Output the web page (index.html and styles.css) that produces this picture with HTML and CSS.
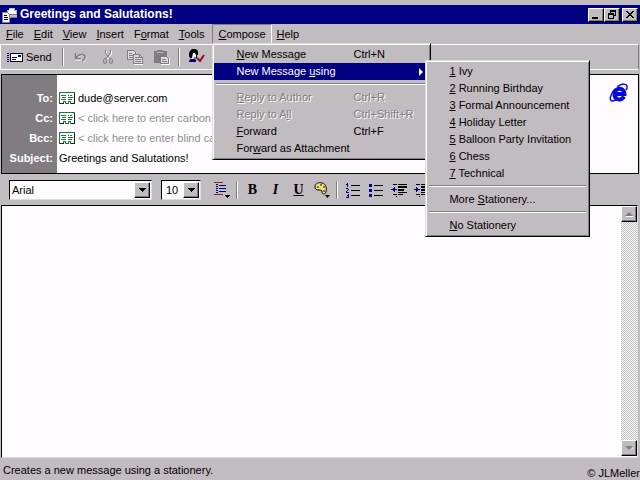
FILE: index.html
```html
<!DOCTYPE html>
<html lang="en">
<head>
  <meta charset="utf-8">
  <title>Greetings and Salutations!</title>
  <link rel="stylesheet" href="styles.css">
</head>
<body>
  <div class="window">
    <header class="titlebar">
      <svg class="icon" width="16" height="16" viewBox="0 0 16 16" shape-rendering="crispEdges">
        <path fill="#c0bcc0" d="M5 3h2V1h6v2h2v8H5z"/>
        <path fill="#fff" d="M6 4h1V2h5v2h2v3H6z"/>
        <path fill="#807c80" d="M8 7h7v1H8zM9 10h6v1H9z"/>
        <path fill="#fff" stroke="#807c80" d="M.5 5.500h5l2 2v8h-7z"/>
        <path fill="#000" d="M2 8h3v1H2zM2 10h4v1H2zM2 12h4v1H2z"/>
      </svg>
      <h1>Greetings and Salutations!</h1>
      <div class="window-buttons">
        <button aria-label="Minimize"><svg width="10" height="9" viewBox="0 0 10 9"><path d="M1 7h6v2H1z"/></svg></button>
        <button aria-label="Restore"><svg width="10" height="9" viewBox="0 0 10 9" shape-rendering="crispEdges"><path fill-rule="evenodd" d="M3 0h6v6H7V5h1V2H4v1H3zM1 3h6v6H1zM2 5v3h4V5z"/></svg></button>
        <button class="close" aria-label="Close"><svg width="10" height="9" viewBox="0 0 10 9" shape-rendering="crispEdges"><path d="M1 1h2v1h1v1h2V2h1V1h2v1H8v1H7v1H6v1h1v1h1v1h1v1H7V7H6V6H4v1H3v1H1V7h1V6h1V5h1V4H3V3H2V2H1z"/></svg></button>
      </div>
    </header>

    <nav class="menubar">
      <button><u>F</u>ile</button>
      <button><u>E</u>dit</button>
      <button><u>V</u>iew</button>
      <button><u>I</u>nsert</button>
      <button>F<u>o</u>rmat</button>
      <button><u>T</u>ools</button>
      <div class="menu-holder">
        <button class="open"><u>C</u>ompose</button>
        <div class="menu compose-menu">
          <button><span><u>N</u>ew Message</span><span class="key">Ctrl+N</span></button>
          <div class="submenu-holder">
            <button class="selected"><span>New Message <u>u</u>sing</span>
              <svg class="arrow" width="4" height="8" viewBox="0 0 4 8"><path fill="#fff" d="M0 0l4 4-4 4z"/></svg>
            </button>
            <div class="menu stationery-menu">
              <button><span><u>1</u> Ivy</span></button>
              <button><span><u>2</u> Running Birthday</span></button>
              <button><span><u>3</u> Formal Announcement</span></button>
              <button><span><u>4</u> Holiday Letter</span></button>
              <button><span><u>5</u> Balloon Party Invitation</span></button>
              <button><span><u>6</u> Chess</span></button>
              <button><span><u>7</u> Technical</span></button>
              <hr>
              <button><span>More <u>S</u>tationery...</span></button>
              <hr>
              <button><span><u>N</u>o Stationery</span></button>
            </div>
          </div>
          <hr>
          <button disabled><span><u>R</u>eply to Author</span><span class="key">Ctrl+R</span></button>
          <button disabled><span>Reply to A<u>l</u>l</span><span class="key">Ctrl+Shift+R</span></button>
          <button><span><u>F</u>orward</span><span class="key">Ctrl+F</span></button>
          <button><span>For<u>w</u>ard as Attachment</span></button>
        </div>
      </div>
      <button><u>H</u>elp</button>
    </nav>

    <div class="toolbar">
      <button class="send">
        <svg width="16" height="11" viewBox="0 0 16 11" shape-rendering="crispEdges">
          <path fill="#000080" d="M0 1h2v1H0zM0 3h2v1H0zM0 5h2v1H0zM0 7h2v1H0zM0 9h2v1H0z"/>
          <path fill="#fff" stroke="#000" d="M3.500 1.500h12v8h-12z"/>
          <path fill="#000080" d="M11 3h3v2h-3zM5 5h5v1H5zM5 7h4v1H5z"/>
        </svg>
        Send
      </button>
      <span class="divider"></span>
      <button class="tool" aria-label="Undo">
        <svg width="16" height="16" viewBox="0 0 16 16" fill="none">
          <path stroke="#fff" d="M3 5v6h6M4 10c3-5 9-4 9-1 0 2-1 3-3 4"/>
          <path stroke="#807c80" stroke-width="1.500" d="M2.500 4v5.500H8M3 9c3-5 9-4 9-1 0 2-1 3-3 4"/>
        </svg>
      </button>
      <button class="tool" aria-label="Cut">
        <svg width="16" height="16" viewBox="0 0 16 16" fill="none">
          <path stroke="#fff" d="M6.500 2v3l5 6M11.500 2v3l-5 6"/>
          <g stroke="#807c80">
            <path d="M5.500 1v3l5 6M10.500 1v3l-5 6"/>
            <ellipse cx="5" cy="12" rx="1.500" ry="2.500"/>
            <ellipse cx="11" cy="12" rx="1.500" ry="2.500"/>
          </g>
        </svg>
      </button>
      <button class="tool" aria-label="Copy">
        <svg width="16" height="16" viewBox="0 0 16 16" shape-rendering="crispEdges">
          <g fill="#dedade" stroke="#807c80">
            <path d="M.5 1.500h6l2 2v7h-8z"/>
            <path d="M6.500 5.500h6l3 3v6h-9z"/>
          </g>
          <path fill="#807c80" d="M2 4h3v1H2zM2 6h4v1H2zM2 8h4v1H2zM8 8h4v1H8zM8 10h6v1H8zM8 12h6v1H8zM12 5h1v3h3v1h-4z"/>
          <path fill="#fff" d="M7 15h9v1H7z"/>
        </svg>
      </button>
      <button class="tool" aria-label="Paste">
        <svg width="17" height="16" viewBox="0 0 17 16" shape-rendering="crispEdges">
          <path fill="#807c80" d="M1 2h3V1h6v1h4v12H1z"/>
          <path fill="#c0bcc0" d="M4 3h6v1H4z"/>
          <path fill="#dedade" stroke="#807c80" d="M7.500 7.500h6l2 2v5h-8z"/>
          <path fill="#807c80" d="M9 10h4v1H9zM9 12h5v1H9z"/>
          <path fill="#fff" d="M8 15h9v1H8zM16 9h1v6h-1z"/>
        </svg>
      </button>
      <span class="divider"></span>
      <button class="tool check" aria-label="Check Names">
        <svg width="17" height="16" viewBox="0 0 17 16">
          <path fill="#fff" d="M4 4h4v6H4z"/>
          <path d="M2 2l2-2h4l2 2v4H8L7 4H5l-1 5H2L1 7V4z"/>
          <path fill="none" stroke="#000" d="M8.500 5v4h-3"/>
          <path fill="#000080" d="M1 13l1-3h5l1 1v2z"/>
          <path fill="none" stroke="#901020" stroke-width="2" d="M9 9l3 3 4-6"/>
        </svg>
      </button>
    </div>

    <form class="headers">
      <div class="fields">
        <label for="to">To:</label>
        <div class="field">
          <svg class="card" width="16" height="13" viewBox="0 0 16 13" shape-rendering="crispEdges"><path fill="#fff" stroke="#207838" d="M.5.5h15v11h-4v-2h-2v2h-3v-2h-2v2h-4z"/><path fill="#207838" d="M2 3h5v1H2zM3 5h4v1H3zM2 7h5v1H2zM9 3h1v1H9zM11 3h2v1h-2zM9 5h5v1H9zM9 7h4v1H9z"/><path fill="#102818" d="M15 1h1v11h-1zM12 11h4v1h-4zM1 11h4v1H1z"/></svg>
          <input id="to" type="text" value="dude@server.com">
        </div>
        <label for="cc">Cc:</label>
        <div class="field">
          <svg class="card" width="16" height="13" viewBox="0 0 16 13" shape-rendering="crispEdges"><path fill="#fff" stroke="#207838" d="M.5.5h15v11h-4v-2h-2v2h-3v-2h-2v2h-4z"/><path fill="#207838" d="M2 3h5v1H2zM3 5h4v1H3zM2 7h5v1H2zM9 3h1v1H9zM11 3h2v1h-2zM9 5h5v1H9zM9 7h4v1H9z"/><path fill="#102818" d="M15 1h1v11h-1zM12 11h4v1h-4zM1 11h4v1H1z"/></svg>
          <input id="cc" type="text" placeholder="&lt; click here to enter carbon copy recipients &gt;">
        </div>
        <label for="bcc">Bcc:</label>
        <div class="field">
          <svg class="card" width="16" height="13" viewBox="0 0 16 13" shape-rendering="crispEdges"><path fill="#fff" stroke="#207838" d="M.5.5h15v11h-4v-2h-2v2h-3v-2h-2v2h-4z"/><path fill="#207838" d="M2 3h5v1H2zM3 5h4v1H3zM2 7h5v1H2zM9 3h1v1H9zM11 3h2v1h-2zM9 5h5v1H9zM9 7h4v1H9z"/><path fill="#102818" d="M15 1h1v11h-1zM12 11h4v1h-4zM1 11h4v1H1z"/></svg>
          <input id="bcc" type="text" placeholder="&lt; click here to enter blind carbon copy recipients &gt;">
        </div>
        <label for="subject">Subject:</label>
        <div class="field"><input id="subject" type="text" value="Greetings and Salutations!"></div>
      </div>
      <svg class="logo" width="20" height="20" viewBox="0 0 20 20" fill="none" stroke="#0808d8">
        <path stroke-width="4" d="M5 11h10.500c0-7-9.500-7-10 0 0 6.500 7 7 9.500 2.500"/>
        <path stroke-width="1.500" d="M8 4c5-4 11-4 10 1-.3 1-.5 1.500-1 2M6 6c-5 5-6 12-3 12 2 0 4-1 6-2"/>
      </svg>
    </form>

    <div class="formatbar">
      <span class="combo font-name">
        <select aria-label="Font"><option>Arial</option></select>
        <span class="combo-arrow"><svg width="7" height="4" viewBox="0 0 7 4" shape-rendering="crispEdges"><path d="M0 0h7v1H0zM1 1h5v1H1zM2 2h3v1H2zM3 3h1v1H3z"/></svg></span>
      </span>
      <span class="combo font-size">
        <select aria-label="Font size"><option>10</option></select>
        <span class="combo-arrow"><svg width="7" height="4" viewBox="0 0 7 4" shape-rendering="crispEdges"><path d="M0 0h7v1H0zM1 1h5v1H1zM2 2h3v1H2zM3 3h1v1H3z"/></svg></span>
      </span>
      <button class="tool" aria-label="Paragraph style">
        <svg width="16" height="16" viewBox="0 0 16 16" shape-rendering="crispEdges">
          <path fill="#902030" d="M0 0h9v1H0zM0 12h9v1H0z"/>
          <path fill="#000080" d="M2 2h2v1H2zM2 4h2v1H2zM2 6h2v1H2zM2 8h2v1H2zM2 10h2v1H2zM5 3h7v1H5zM5 6h7v1H5zM5 9h7v1H5z"/>
          <path d="M11 13h5v1h-5zM12 14h3v1h-3zM13 15h1v1h-1z"/>
        </svg>
      </button>
      <span class="divider"></span>
      <button class="tool letter bold">B</button>
      <button class="tool letter italic">I</button>
      <button class="tool letter underline">U</button>
      <button class="tool" aria-label="Font color">
        <svg width="16" height="16" viewBox="0 0 16 16">
          <path fill="#f0e080" stroke="#000" d="M1 5c0-4 4-5 7-4 4 1 5 5 4 9-1 3-4 2-4 0s-1-2-3-2c-3 0-4-1-4-3z"/>
          <path fill="#fff" stroke="#605020" d="M3.500 4.500h1v1h-1zM6.500 2.500h1v1h-1zM9.500 4.500h1v1h-1zM9.500 8.500h1v1h-1z"/>
          <path d="M11 13h5l-2.500 3z"/>
        </svg>
      </button>
      <span class="divider"></span>
      <button class="tool" aria-label="Numbered list">
        <svg width="16" height="16" viewBox="0 0 16 16" shape-rendering="crispEdges">
          <path fill="#000080" d="M2 1h1v4H2zM1 2h1v1H1zM1 6h2v1h1v1H3v1H2v1h2v1H1V9h1V8h1V7H1zM1 12h3v4H1v-1h2v-1H2v-1h1v-1H1z"/>
          <path d="M6 3h9v1H6zM6 8h9v1H6zM6 13h9v1H6z"/>
        </svg>
      </button>
      <button class="tool" aria-label="Bulleted list">
        <svg width="16" height="16" viewBox="0 0 16 16" shape-rendering="crispEdges">
          <path fill="#0000a0" d="M1 2h3v3H1zM1 7h3v3H1zM1 12h3v3H1z"/>
          <path d="M6 3h9v1H6zM6 8h9v1H6zM6 13h9v1H6z"/>
        </svg>
      </button>
      <button class="tool" aria-label="Decrease indent">
        <svg width="16" height="16" viewBox="0 0 16 16" shape-rendering="crispEdges">
          <path d="M2 2h4v1H2zM7 2h9v1H7zM7 4h9v2H7zM7 7h6v2H7zM7 10h9v1H7zM2 12h4v1H2zM7 12h5v1H7zM5 14h1v1H5z"/>
          <path fill="#000080" d="M0 7h2V6h1V5h1v2h2v1H4v2H3V9H2V8H0z"/>
        </svg>
      </button>
      <button class="tool" aria-label="Increase indent">
        <svg width="16" height="16" viewBox="0 0 16 16" shape-rendering="crispEdges">
          <path d="M2 2h4v1H2zM7 2h9v1H7zM7 4h9v2H7zM7 7h6v2H7zM7 10h9v1H7zM2 12h4v1H2zM7 12h5v1H7zM5 14h1v1H5z"/>
          <path fill="#000080" d="M6 7H4V6H3V5H2v2H0v1h2v2h1V9h1V8h2z"/>
        </svg>
      </button>
    </div>

    <main class="editor">
      <textarea aria-label="Message"></textarea>
      <div class="scrollbar">
        <button aria-label="Scroll up"><svg width="8" height="5" viewBox="0 0 8 5"><path fill="#807c80" d="M4 0l4 4H0z"/><path fill="#fff" d="M1 4h7v1H1z"/></svg></button>
        <button aria-label="Scroll down"><svg width="8" height="5" viewBox="0 0 8 5"><path fill="#fff" d="M5 5l3-4v1L5 5z"/><path fill="#807c80" d="M0 0h8L4 4z"/></svg></button>
      </div>
    </main>

    <footer class="statusbar">
      <span>Creates a new message using a stationery.</span>
      <span class="credit">© JLMeller</span>
    </footer>
  </div>
</body>
</html>
```

FILE: styles.css
```css
* {
  box-sizing: border-box;
}

body {
  margin: 0;
  background: #c0bcc0;
  font-family: "Liberation Sans", Arial, sans-serif;
  font-size: 11px;
  line-height: 17px;
  color: #000;
}

button, input, select, textarea {
  margin: 0;
  padding: 0;
  border: none;
  border-radius: 0;
  outline: none;
  background: none;
  font: inherit;
  color: inherit;
}

svg {
  display: block;
  flex: none;
}

u {
  text-underline-offset: 1px;
}

.window {
  display: flex;
  flex-direction: column;
  min-height: 100vh;
  padding-top: 5px;
}

/* title bar */
.titlebar {
  display: flex;
  align-items: center;
  height: 19px;
  padding: 0 2px;
  background: #000080;
  color: #fff;
}

.titlebar h1 {
  flex: 1;
  margin: 0 2px;
  font-size: 12px;
  font-weight: bold;
}

.window-buttons {
  display: flex;
}

.window-buttons button,
.combo-arrow,
.scrollbar button {
  display: flex;
  align-items: center;
  justify-content: center;
  width: 16px;
  height: 14px;
  background: #c0bcc0;
  border: 1px solid;
  border-color: #fff #000 #000 #fff;
  box-shadow: inset -1px -1px #807c80;
}

.window-buttons .close {
  margin-left: 2px;
}

/* menus */
.menubar {
  display: flex;
  height: 20px;
  padding-left: 1px;
}

.menubar > button,
.menu-holder > button {
  height: 20px;
  padding: 0 5px;
}

.menu-holder {
  position: relative;
  margin-left: 3px;
}

.menu-holder > .open {
  border: 1px solid;
  border-color: #807c80 #fff #fff #807c80;
}

.menu {
  position: absolute;
  z-index: 2;
  padding: 2px 1px;
  background: #c0bcc0;
  border: 1px solid;
  border-color: #dedade #000 #000 #dedade;
  box-shadow: inset 1px 1px #fff, inset -1px -1px #807c80;
}

.compose-menu {
  top: 19px;
  left: 0;
  width: 219px;
}

.stationery-menu {
  top: -3px;
  left: 211px;
  width: 165px;
}

.menu button {
  display: flex;
  align-items: center;
  width: 100%;
  height: 17px;
  padding-left: 22px;
  text-align: left;
  white-space: nowrap;
}

.menu button span:first-child {
  flex: 1;
}

.menu .key {
  width: 76px;
}

.menu .arrow {
  margin-right: 6px;
}

.menu button:disabled {
  color: #807c80;
  text-shadow: 1px 1px #fff;
}

.menu .selected {
  background: #000080;
  color: #fff;
}

.menu hr {
  height: 2px;
  margin: 3px 2px 4px;
  border: none;
  border-top: 1px solid #807c80;
  border-bottom: 1px solid #fff;
}

.submenu-holder {
  position: relative;
}

/* toolbars */
.toolbar,
.formatbar {
  display: flex;
  align-items: center;
}

.toolbar {
  height: 26px;
  margin: 0 1px 4px 0;
  padding-left: 6px;
  border: 1px solid;
  border-color: #fff #807c80 #fff #fff;
}

.send {
  display: flex;
  align-items: center;
  gap: 3px;
  width: 52px;
}

.divider {
  width: 2px;
  height: 18px;
  margin: 0 3px;
  border-left: 1px solid #807c80;
  border-right: 1px solid #fff;
}

.tool {
  display: flex;
  align-items: center;
  justify-content: center;
  width: 23px;
  height: 20px;
}

.toolbar .tool {
  width: 27px;
}

/* address block */
.headers {
  display: flex;
  margin: 0 1px;
  border: 1px solid #000;
  background: #fffbff;
}

.fields {
  flex: 1;
  display: grid;
  grid-template-columns: 55px 1fr;
  grid-auto-rows: 20px;
  padding: 13px 0 5px;
  background: linear-gradient(to right, #807c80 55px, #fffbff 55px);
}

.fields label {
  padding-right: 4px;
  color: #fff;
  font-weight: bold;
  line-height: 20px;
  text-align: right;
}

.field {
  display: flex;
  align-items: center;
  gap: 3px;
  padding-left: 2px;
}

.field input {
  flex: 1;
  height: 20px;
}

.field input::placeholder {
  color: #908c90;
  opacity: 1;
}

.logo {
  margin: 8px 9px;
}

.formatbar {
  height: 31px;
  padding-left: 9px;
}

.combo {
  display: flex;
  height: 20px;
  margin-right: 9px;
  padding: 1px;
  background: #fffbff;
  border: 1px solid;
  border-color: #000 #dedade #dedade #000;
}

.combo select {
  flex: 1;
  min-width: 0;
  padding-left: 1px;
  appearance: none;
}

.font-name {
  width: 143px;
}

.font-size {
  width: 40px;
}

.font-size select {
  padding-left: 3px;
}

.combo-arrow {
  height: 16px;
  pointer-events: none;
}

.letter {
  font-family: "Liberation Serif", "Times New Roman", serif;
  font-size: 14px;
  font-weight: bold;
}

.italic {
  font-style: italic;
}

.underline {
  text-decoration: underline;
}

/* message body */
.editor {
  display: flex;
  flex: 1;
  margin: 0 2px 0 1px;
  padding-bottom: 1px;
  background: #fffbff;
  border: 1px solid;
  border-color: #000 #dedade #dedade #000;
}

.editor textarea {
  flex: 1;
  padding: 8px;
  resize: none;
}

.scrollbar {
  display: flex;
  flex-direction: column;
  justify-content: space-between;
  width: 16px;
  background: repeating-conic-gradient(#c0bcc0 0 25%, #fffbff 0 50%) 0 0 / 2px 2px;
}

.scrollbar button {
  height: 16px;
}

.statusbar {
  display: flex;
  justify-content: space-between;
  height: 22px;
  padding: 4px 0 0 3px;
}

.credit {
  padding-top: 3px;
}
```
